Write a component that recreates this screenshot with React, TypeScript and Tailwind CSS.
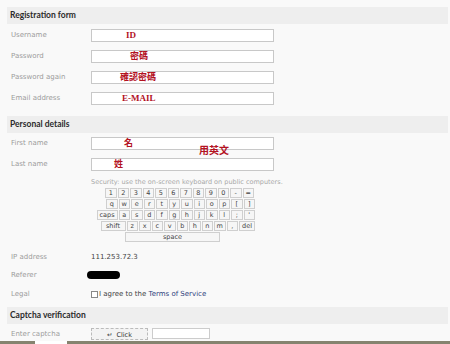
import React from 'react';

const labelFont = { fontFamily: '"DejaVu Sans", Verdana, sans-serif' };
const headFont = { fontFamily: 'Lato, "Open Sans", sans-serif' };
const redFont = { fontFamily: '"Liberation Serif", "Noto Sans CJK TC", serif' };

function SectionHeader({ title }: { title: string }) {
  return (
    <div
      className="h-[17px] bg-[#eeeeee] flex items-center pl-[3px] text-[8.5px] font-bold text-[#2b2b2b]"
      style={headFont}
    >
      {title}
    </div>
  );
}

function Field({ label, note, noteX }: { label: string; note?: string; noteX?: number }) {
  return (
    <div className="h-[21px] flex items-start">
      <div className="w-[84px] pl-[4px] pt-[1px] text-[7px] text-[#9c9c9c] leading-[11px]" style={labelFont}>
        {label}
      </div>
      <div className="w-[183px] h-[13px] bg-white border border-[#c8c8c8] flex items-center">
        {note && (
          <span
            className="text-[9px] font-bold text-[#b3121f] leading-none"
            style={{ ...redFont, marginLeft: noteX }}
          >
            {note}
          </span>
        )}
      </div>
    </div>
  );
}

function Key({ k, w }: { k: string; w?: string }) {
  return (
    <div
      className={`${w ?? 'w-[11.5px]'} h-[10px] border border-[#cfcfcf] bg-[#f6f6f6] flex items-center justify-center text-[6.5px] text-[#444] leading-none`}
      style={labelFont}
    >
      {k}
    </div>
  );
}

export default function App() {
  const row1 = ['1', '2', '3', '4', '5', '6', '7', '8', '9', '0', '-', '='];
  const row2 = ['q', 'w', 'e', 'r', 't', 'y', 'u', 'i', 'o', 'p', '[', ']'];
  const row3 = ['a', 's', 'd', 'f', 'g', 'h', 'j', 'k', 'l', ';', "'"];
  const row4 = ['z', 'x', 'c', 'v', 'b', 'h', 'n', 'm', ','];

  return (
    <div className="w-[450px] h-[344px] overflow-hidden bg-[#f9f9f9] flex flex-col">
      <div className="flex-1 overflow-hidden pl-[7px] pr-[2px] pt-[7px]">
        <SectionHeader title="Registration form" />
        <div className="pt-[5px] pb-[3px]">
          <Field label="Username" note="ID" noteX={34} />
          <Field label="Password" note="密碼" noteX={38} />
          <Field label="Password again" note="確認密碼" noteX={28} />
          <Field label="Email address" note="E-MAIL" noteX={30} />
        </div>

        <SectionHeader title="Personal details" />
        <div className="pt-[4px] relative">
          <Field label="First name" note="名" noteX={32} />
          <Field label="Last name" note="姓" noteX={22} />
          <span
            className="absolute left-[192px] top-[13px] text-[10px] font-bold text-[#b3121f] leading-none"
            style={redFont}
          >
            用英文
          </span>
        </div>

        <div className="pl-[84px] -mt-[1px]">
          <div className="text-[6.5px] text-[#a8a8a8] leading-[9px]" style={labelFont}>
            Security: use the on-screen keyboard on public computers.
          </div>
          <div className="w-[160px] ml-[4px] mt-[1px] flex flex-col items-end gap-[1px]">
            <div className="flex gap-[1px] pr-[1px]">
              {row1.map((k) => (
                <Key key={k} k={k} />
              ))}
            </div>
            <div className="flex gap-[1px]">
              {row2.map((k) => (
                <Key key={k} k={k} />
              ))}
            </div>
            <div className="flex gap-[1px]">
              <Key k="caps" w="w-[21px]" />
              {row3.map((k) => (
                <Key key={k} k={k} />
              ))}
            </div>
            <div className="flex gap-[1px]">
              <Key k="shift" w="w-[25px]" />
              {row4.map((k, i) => (
                <Key key={k + i} k={k} />
              ))}
              <Key k="del" w="w-[16px]" />
            </div>
            <div className="flex w-full pl-[30px]">
              <Key k="space" w="w-[95px]" />
            </div>
          </div>
        </div>

        <div className="mt-[6px] text-[7px] leading-[11px]" style={labelFont}>
          <div className="h-[18px] flex items-center">
            <div className="w-[84px] pl-[4px] text-[#9c9c9c]">IP address</div>
            <div className="text-[#444]">111.253.72.3</div>
          </div>
          <div className="h-[18px] flex items-center">
            <div className="w-[80px] pl-[4px] text-[#9c9c9c]">Referer</div>
            <div className="w-[33px] h-[8px] rounded-full bg-black" />
          </div>
          <div className="h-[20px] flex items-center">
            <div className="w-[84px] pl-[4px] text-[#9c9c9c]">Legal</div>
            <div className="w-[7px] h-[7px] border border-[#888] bg-white mr-[1px]" />
            <span className="text-[#444]">
              I agree to the <span className="text-[#2d3f7c]">Terms of Service</span>
            </span>
          </div>
        </div>

        <div className="mt-[3px]">
          <SectionHeader title="Captcha verification" />
        </div>
        <div className="pt-[4px] flex items-start">
          <div className="w-[84px] pl-[4px] pt-[1px] text-[7px] text-[#9c9c9c] leading-[11px]" style={labelFont}>
            Enter captcha
          </div>
          <div
            className="w-[57px] h-[12px] border border-[#bbb] border-dashed bg-[#f3f3f3] flex items-end justify-center gap-[4px] text-[6.5px] text-[#333] leading-none pb-[1px]"
            style={labelFont}
          >
            <span>↵</span>
            <span>Click</span>
          </div>
          <div className="w-[58px] h-[11px] ml-[4px] bg-white border border-[#ccc]" />
        </div>
      </div>
      <div className="h-[3px] bg-[#85836f] flex">
        <div className="ml-[35px] w-[32px] bg-white" />
      </div>
    </div>
  );
}
